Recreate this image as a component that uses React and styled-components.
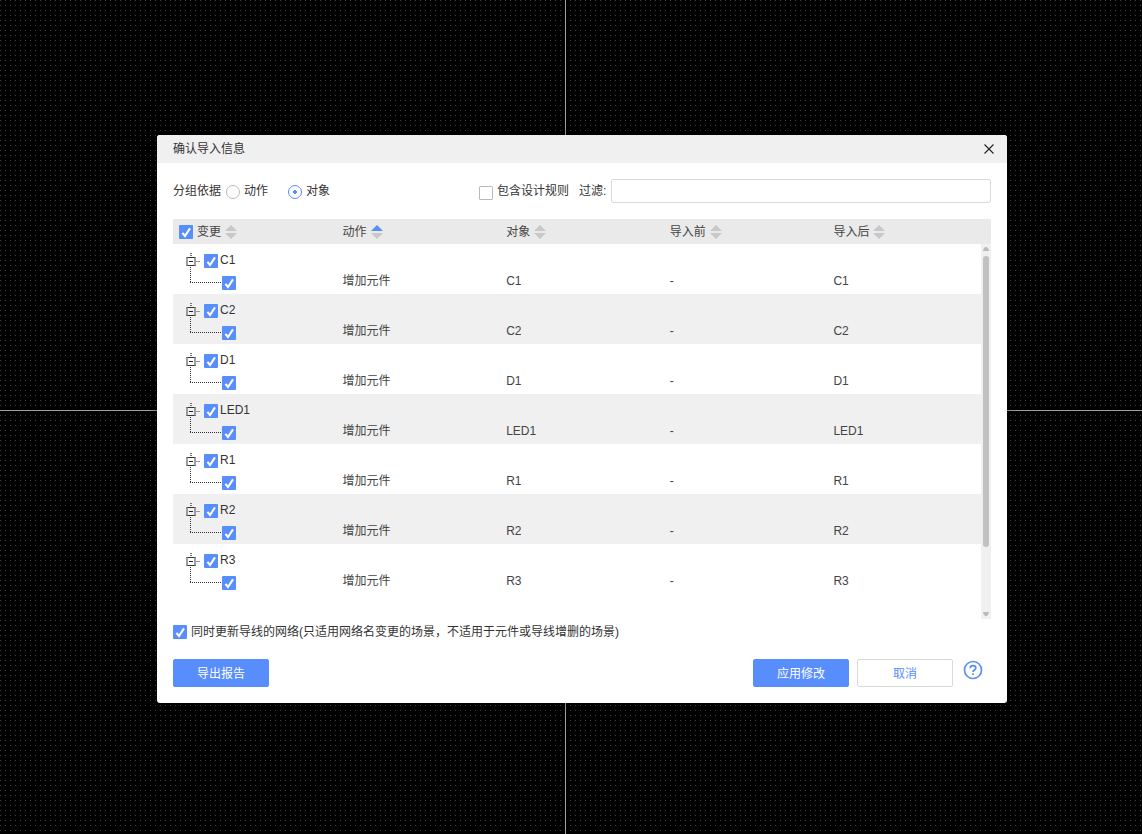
import React, { useState } from "react";
import styled, { createGlobalStyle } from "styled-components";

const checkMark = `url("data:image/svg+xml,%3Csvg xmlns='http://www.w3.org/2000/svg' viewBox='0 0 14 14'%3E%3Cpath d='M3.4 7.8 6 11 11 3.4' fill='none' stroke='%23fff' stroke-width='2.1'/%3E%3C/svg%3E")`;

const GlobalStyle = createGlobalStyle`
  :root {
    --primary: #588efb;
    --text: #333;
    --text-soft: #444;
    --border: #d9d9d9;
  }

  * {
    box-sizing: border-box;
  }

  body {
    margin: 0;
    background: #000;
    color: var(--text);
    font: 12px/18px "Liberation Sans", "Noto Sans CJK SC", sans-serif;
  }

  button, input {
    font: inherit;
    color: inherit;
  }
`;

const Canvas = styled.main`
  min-height: 100vh;
  padding: 135px 135px 131px 157px;
  background-color: #000;
  background-image: linear-gradient(#a0a0a0, #a0a0a0),
    linear-gradient(#a0a0a0, #a0a0a0),
    linear-gradient(90deg, transparent 1px, #000 1px),
    linear-gradient(#444 1px, #000 1px);
  background-size: 1px 100%, 100% 1px, 5px 5px, 5px 5px;
  background-position: 565px 0, 0 410px, 0 0, 0 0;
  background-repeat: no-repeat, no-repeat, repeat, repeat;
`;

const Dialog = styled.section`
  overflow: hidden;
  border-radius: 3px;
  background: #fff;
  box-shadow: 0 0 10px rgba(0, 0, 0, 0.4);
`;

const TitleBar = styled.header`
  display: flex;
  align-items: center;
  justify-content: space-between;
  height: 28px;
  padding: 0 13px 0 16px;
  background: #f0f0f0;
`;

const Title = styled.h1`
  margin: 0;
  font-size: 12px;
  font-weight: normal;
`;

const IconButton = styled.button`
  display: flex;
  padding: 0;
  border: 0;
  background: none;
  color: ${({ $primary }) => ($primary ? "var(--primary)" : "#222")};
`;

const Body = styled.div`
  padding: 16px;
`;

const GroupBy = styled.div`
  display: flex;
  flex: 0 0 306px;
  align-items: center;
  gap: 5px;
`;

const Option = styled.label`
  display: flex;
  align-items: center;
  gap: 4px;
  margin-right: ${({ $space }) => $space || 0}px;
`;

const Radio = styled.input.attrs({ type: "radio" })`
  appearance: none;
  width: 14px;
  height: 14px;
  margin: 2px 0 0;
  border: 1px solid #bbb;
  border-radius: 50%;
  background: #fff;

  &:checked {
    border-color: var(--primary);
    background: radial-gradient(circle, var(--primary) 2px, #fff 2px);
  }
`;

const Checkbox = styled.input.attrs({ type: "checkbox" })`
  appearance: none;
  flex: none;
  width: 14px;
  height: 14px;
  margin: 0;
  border: 1px solid #bbb;
  border-radius: 1px;
  background: #fff;

  &:checked {
    border: 0;
    background: var(--primary) ${checkMark};
  }
`;

const Toolbar = styled.div`
  display: flex;
  align-items: center;
  height: 24px;
  margin-bottom: 16px;

  ${Checkbox} {
    margin-top: 3px;
  }
`;

const Filter = styled.label`
  display: flex;
  flex: 1;
  align-items: center;
  gap: 5px;
`;

const FilterInput = styled.input`
  flex: 1;
  min-width: 0;
  height: 24px;
  padding: 0 6px;
  border: 1px solid var(--border);
  border-radius: 2px;
`;

const TableArea = styled.div`
  position: relative;
  height: 400px;
  overflow: hidden;
`;

const Table = styled.table`
  width: 100%;
  table-layout: fixed;
  border-collapse: collapse;
`;

const HeadCell = styled.th`
  height: 25px;
  padding: 0 6px;
  background: #eaeaea;
  color: var(--text-soft);
  font-weight: normal;
  text-align: left;
`;

const HeadContent = styled.div`
  display: flex;
  align-items: center;
  gap: 4px;
`;

const SortButton = styled.button`
  display: flex;
  align-items: center;
  gap: 4px;
  padding: 0;
  border: 0;
  background: none;
`;

const Group = styled.tbody`
  &:nth-of-type(even) {
    background: #f0f0f0;
  }
`;

const Cell = styled.td`
  height: ${({ $head }) => ($head ? 28 : 22)}px;
  padding: 0 6px;
  color: var(--text-soft);
  vertical-align: top;
`;

const TreeCell = styled(Cell)`
  padding: 0 0 0 13px;
  color: var(--text);
`;

const TreeNode = styled.div`
  display: flex;
  align-items: flex-start;

  svg {
    flex: none;
  }

  ${Checkbox} {
    margin: ${({ $head }) => ($head ? "10px 2px 0 4px" : "4px 0 0")};
  }
`;

const NodeName = styled.label`
  margin-top: 7px;
`;

const Scrollbar = styled.div`
  position: absolute;
  top: 25px;
  right: 0;
  bottom: 0;
  display: flex;
  flex-direction: column;
  align-items: center;
  width: 10px;
  background: #f0f0f0;
`;

const ScrollTrack = styled.div`
  flex: 1;
  width: 6px;
`;

const ScrollThumb = styled.div`
  height: 83%;
  border-radius: 3px;
  background: #c1c1c1;
`;

const NetOption = styled(Option)`
  height: 26px;
  margin-bottom: 14px;
`;

const Footer = styled.footer`
  display: flex;
  align-items: flex-start;
  gap: 8px;
`;

const Button = styled.button`
  width: 96px;
  height: 28px;
  padding: 2px 0 0;
  border: 1px solid
    ${({ $plain }) => ($plain ? "var(--border)" : "var(--primary)")};
  border-radius: 2px;
  background: ${({ $plain }) => ($plain ? "#fff" : "var(--primary)")};
  color: ${({ $plain }) => ($plain ? "var(--primary)" : "#fff")};
`;

const Spacer = styled.div`
  flex: 1;
`;

const HelpButton = styled(IconButton)`
  margin: 1px 8px 0 2px;
`;

const columns = ["变更", "动作", "对象", "导入前", "导入后"];
const parts = ["C1", "C2", "D1", "LED1", "R1", "R2", "R3"];

const SortIcon = ({ active }) => (
  <svg width="12" height="14" viewBox="0 0 12 14" aria-hidden="true">
    <path d="M0 6 6 0l6 6z" fill={active ? "#588efb" : "#c8c8c8"} />
    <path d="M0 8h12l-6 6z" fill="#c8c8c8" />
  </svg>
);

const Expander = () => (
  <svg width="14" height="28" fill="none" aria-hidden="true">
    <path d="M5 9v4" stroke="#555" strokeWidth="1.6" strokeDasharray="1 1" />
    <path d="M4.5 23v5" stroke="#333" strokeDasharray="1 1" />
    <path d="M10 17.5h4" stroke="#999" />
    <path d="M.5 13.5h9M.5 21.5h9" stroke="#333" />
    <path d="M1 13v9M9 13v9" stroke="#777" strokeWidth="1.4" />
    <path d="M3 17.5h4" stroke="#222" />
  </svg>
);

const Branch = () => (
  <svg width="36" height="22" fill="none" aria-hidden="true">
    <path d="M4.5 1v10" stroke="#333" strokeDasharray="1 1" />
    <path d="M4 10.5h32" stroke="#333" strokeDasharray="1 1" />
  </svg>
);

const ScrollArrow = ({ down }) => (
  <svg width="6" height="12" viewBox="0 0 6 12" aria-hidden="true">
    <path d={down ? "M0 5h6v1L4 9H2L0 6z" : "M0 7h6V6L4 3H2L0 6z"} fill="#bbb" />
  </svg>
);

const PartRows = ({ name }) => (
  <Group>
    <tr>
      <TreeCell $head colSpan={5}>
        <TreeNode $head>
          <Expander />
          <Checkbox id={`part-${name}`} defaultChecked />
          <NodeName htmlFor={`part-${name}`}>{name}</NodeName>
        </TreeNode>
      </TreeCell>
    </tr>
    <tr>
      <TreeCell>
        <TreeNode>
          <Branch />
          <Checkbox aria-label={`增加元件 ${name}`} defaultChecked />
        </TreeNode>
      </TreeCell>
      <Cell>增加元件</Cell>
      <Cell>{name}</Cell>
      <Cell>-</Cell>
      <Cell>{name}</Cell>
    </tr>
  </Group>
);

const App = () => {
  const [groupBy, setGroupBy] = useState("对象");

  return (
    <>
      <GlobalStyle />
      <Canvas>
        <Dialog role="dialog" aria-labelledby="dialog-title">
          <TitleBar>
            <Title id="dialog-title">确认导入信息</Title>
            <IconButton aria-label="关闭">
              <svg width="10" height="10" stroke="currentColor">
                <path d="M.5.5l9 9M9.5.5l-9 9" strokeWidth="1.1" />
              </svg>
            </IconButton>
          </TitleBar>
          <Body>
            <Toolbar>
              <GroupBy role="radiogroup" aria-label="分组依据">
                <span>分组依据</span>
                {["动作", "对象"].map((value) => (
                  <Option key={value} $space={15}>
                    <Radio
                      name="groupBy"
                      checked={groupBy === value}
                      onChange={() => setGroupBy(value)}
                    />
                    {value}
                  </Option>
                ))}
              </GroupBy>
              <Option $space={10}>
                <Checkbox />
                包含设计规则
              </Option>
              <Filter>
                过滤:
                <FilterInput type="text" />
              </Filter>
            </Toolbar>

            <TableArea>
              <Table>
                <thead>
                  <tr>
                    {columns.map((column, index) => (
                      <HeadCell key={column}>
                        <HeadContent>
                          {index === 0 && (
                            <Checkbox aria-label="全选" defaultChecked />
                          )}
                          <SortButton>
                            {column}
                            <SortIcon active={column === "动作"} />
                          </SortButton>
                        </HeadContent>
                      </HeadCell>
                    ))}
                  </tr>
                </thead>
                {parts.map((name) => (
                  <PartRows key={name} name={name} />
                ))}
              </Table>
              <Scrollbar aria-hidden="true">
                <ScrollArrow />
                <ScrollTrack>
                  <ScrollThumb />
                </ScrollTrack>
                <ScrollArrow down />
              </Scrollbar>
            </TableArea>

            <NetOption>
              <Checkbox defaultChecked />
              同时更新导线的网络(只适用网络名变更的场景，不适用于元件或导线增删的场景)
            </NetOption>

            <Footer>
              <Button>导出报告</Button>
              <Spacer />
              <Button>应用修改</Button>
              <Button $plain>取消</Button>
              <HelpButton $primary aria-label="帮助">
                <svg
                  width="20"
                  height="20"
                  fill="none"
                  stroke="currentColor"
                  strokeWidth="1.7"
                >
                  <circle cx="10" cy="10" r="8.5" />
                  <path d="M7.2 8.2C7.2 6.4 8.4 5.6 10 5.6s2.8 1 2.8 2.4c0 1.9-2.8 2-2.8 4" />
                  <path d="M10 13.2v1.8" />
                </svg>
              </HelpButton>
            </Footer>
          </Body>
        </Dialog>
      </Canvas>
    </>
  );
};

export default App;
